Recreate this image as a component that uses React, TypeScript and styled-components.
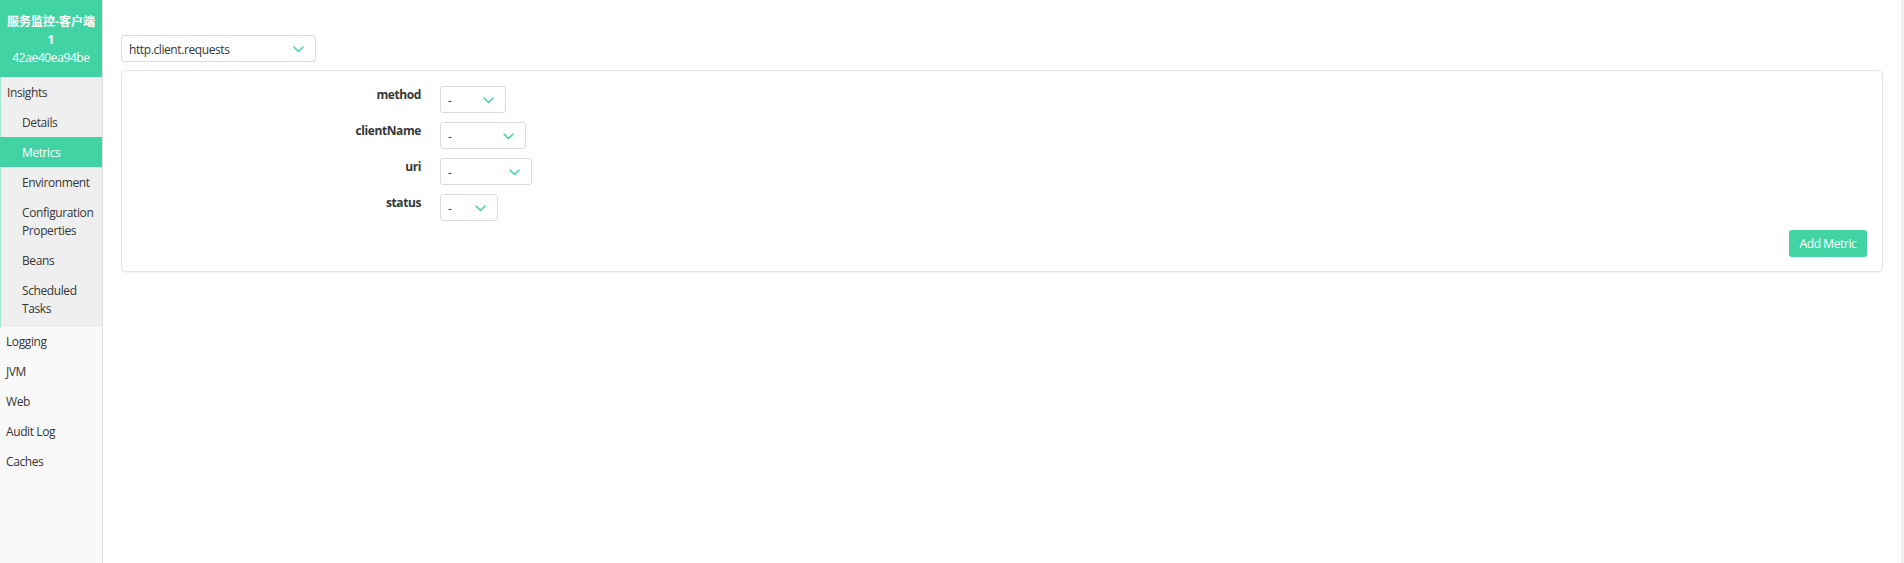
import React from "react";
import styled, { createGlobalStyle } from "styled-components";

const GREEN = "#42d3a5";
const FONT = `"Open Sans", "Noto Sans CJK SC", sans-serif`;

const Global = createGlobalStyle`
  html, body { margin: 0; padding: 0; background: #fff; }
  body { font-family: ${FONT}; font-size: 12px; letter-spacing: -0.4px; color: #363636; }
  * { box-sizing: border-box; }
`;

const Shell = styled.div`
  display: flex;
  height: 563px;
  width: 1904px;
`;

const Sidebar = styled.aside`
  width: 103px;
  flex: none;
  background: #f9f9f9;
  border-right: 1px solid #e2e2e2;
  display: flex;
  flex-direction: column;
`;

const Header = styled.div`
  background: ${GREEN};
  color: #fff;
  text-align: center;
  padding: 13px 2px 10px;
  line-height: 18px;
  font-size: 12px;
`;

const AppName = styled.div`
  font-weight: 700;
  letter-spacing: 0;
`;

const Group = styled.div`
  background: #efefef;
  border-left: 1px solid #9fe6cf;
  padding-bottom: 4px;
`;

const Item = styled.div<{ $sub?: boolean; $active?: boolean }>`
  padding: 7px 4px 5px;
  line-height: 18px;
  font-size: 12px;
  color: ${(p) => (p.$active ? "#fff" : "#363636")};
  background: ${(p) => (p.$active ? GREEN : "transparent")};
  margin-left: ${(p) => (p.$active ? "-1px" : "0")};
  padding-left: ${(p) => (p.$active ? "22px" : p.$sub ? "21px" : "6px")};
`;

const TopItem = styled.div`
  padding: 6px 4px 6px 6px;
  line-height: 18px;
  font-size: 12px;
  color: #363636;
`;

const Main = styled.main`
  flex: 1;
  padding: 35px 18px 0 18px;
  display: flex;
  flex-direction: column;
  gap: 8px;
`;

const ScrollTrack = styled.div`
  width: 3px;
  flex: none;
  background: #f0f0f0;
`;

const SelectBox = styled.div<{ $w: number }>`
  width: ${(p) => p.$w}px;
  height: 27px;
  border: 1px solid #dbdbdb;
  border-radius: 3px;
  background: #fff;
  display: flex;
  align-items: center;
  justify-content: space-between;
  padding: 1px 11px 0 7px;
  font-size: 12px;
  color: #363636;
`;

const Chevron = () => (
  <svg width="11" height="7" viewBox="0 0 11 7" fill="none">
    <path d="M1 1l4.5 4.5L10 1" stroke={GREEN} strokeWidth="1.5" strokeLinecap="round" strokeLinejoin="round" />
  </svg>
);

const Card = styled.section`
  border: 1px solid #e4e4e4;
  border-radius: 5px;
  box-shadow: 0 1px 1px rgba(0, 0, 0, 0.06);
  padding: 15px 15px 14px 15px;
  display: flex;
  flex-direction: column;
  gap: 10px;
`;

const Row = styled.div`
  display: flex;
  align-items: flex-start;
  height: 26px;
`;

const Label = styled.div`
  width: 284px;
  text-align: right;
  margin-right: 19px;
  font-weight: 700;
  font-size: 12px;
  line-height: 18px;
  color: #363636;
`;

const Actions = styled.div`
  display: flex;
  justify-content: flex-end;
`;

const Button = styled.button`
  width: 78px;
  height: 27px;
  border: none;
  border-radius: 3px;
  background: ${GREEN};
  color: #fff;
  font-family: ${FONT};
  font-size: 12px;
  letter-spacing: -0.4px;
  padding: 0;
  cursor: pointer;
`;

const tags = [
  { name: "method", w: 66 },
  { name: "clientName", w: 86 },
  { name: "uri", w: 92 },
  { name: "status", w: 58 },
];

export default function App() {
  return (
    <>
      <Global />
      <Shell>
        <Sidebar>
          <Header>
            <AppName>
              服务监控-客户端
              <br />1
            </AppName>
            <div>42ae40ea94be</div>
          </Header>
          <Group>
            <Item>Insights</Item>
            <Item $sub>Details</Item>
            <Item $sub $active>Metrics</Item>
            <Item $sub>Environment</Item>
            <Item $sub>
              Configuration
              <br />
              Properties
            </Item>
            <Item $sub>Beans</Item>
            <Item $sub>
              Scheduled
              <br />
              Tasks
            </Item>
          </Group>
          <TopItem>Logging</TopItem>
          <TopItem>JVM</TopItem>
          <TopItem>Web</TopItem>
          <TopItem>Audit Log</TopItem>
          <TopItem>Caches</TopItem>
        </Sidebar>
        <Main>
          <SelectBox $w={195}>
            <span>http.client.requests</span>
            <Chevron />
          </SelectBox>
          <Card>
            {tags.map((t) => (
              <Row key={t.name}>
                <Label>{t.name}</Label>
                <SelectBox $w={t.w}>
                  <span>-</span>
                  <Chevron />
                </SelectBox>
              </Row>
            ))}
            <Actions>
              <Button>Add Metric</Button>
            </Actions>
          </Card>
        </Main>
        <ScrollTrack />
      </Shell>
    </>
  );
}
